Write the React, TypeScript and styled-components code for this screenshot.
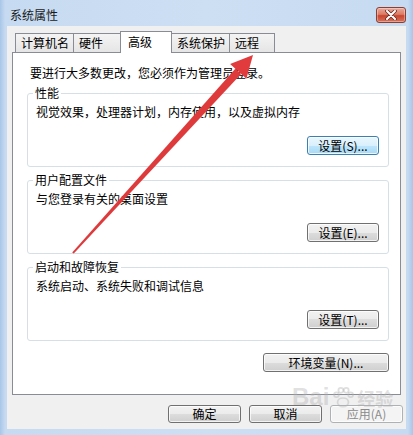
import React from 'react'
import styled, { createGlobalStyle, css } from 'styled-components'

const GlobalStyle = createGlobalStyle`
  html, body {
    margin: 0;
    padding: 0;
    width: 413px;
    height: 435px;
    overflow: hidden;
    background: #fff;
  }
  * {
    box-sizing: border-box;
  }
`

const Frame = styled.div`
  position: relative;
  width: 413px;
  height: 435px;
  padding: 0 7px 6px 7px;
  display: flex;
  flex-direction: column;
  background: linear-gradient(to right, #a8c5e8 0, #c6daf1 5px, #cddff3 50%, #c6daf1 calc(100% - 5px), #a8c5e8 100%);
  font-family: 'Noto Sans CJK SC', 'DejaVu Sans', sans-serif;
  font-size: 12px;
  color: #000;
`

const TitleBar = styled.div`
  height: 26px;
  display: flex;
  justify-content: space-between;
  align-items: flex-start;
`

const Title = styled.div`
  padding: 8px 0 0 3px;
  line-height: 14px;
  color: #1a1a1a;
`

const CloseButton = styled.div`
  margin-top: 7px;
  width: 30px;
  height: 16px;
  border: 1px solid #8a3f33;
  border-radius: 3px;
  display: flex;
  align-items: center;
  justify-content: center;
  background: linear-gradient(#eaa899 0%, #dc7c66 45%, #c9452f 55%, #d8735a 100%);
  box-shadow: inset 0 0 0 1px rgba(255, 255, 255, 0.35);
`

const Client = styled.div`
  flex: 1;
  background: #f0f0f0;
  display: flex;
  flex-direction: column;
  padding: 0 5px;
`

const TabStrip = styled.div`
  margin-top: 5px;
  height: 21px;
  padding-left: 3px;
  display: flex;
  align-items: flex-end;
`

const Tab = styled.div<{ $w: number; $active?: boolean }>`
  width: ${({ $w }) => $w}px;
  height: 19px;
  margin-left: -1px;
  padding: 2px 0 0 5px;
  line-height: 14px;
  border: 1px solid #898c95;
  border-bottom: none;
  background: linear-gradient(#f4f4f4, #e5e5e5);
  white-space: nowrap;
  ${({ $active }) =>
    $active &&
    css`
      position: relative;
      z-index: 2;
      height: 22px;
      margin-bottom: -1px;
      padding: 3px 0 0 7px;
      background: #fff;
    `}
  &:first-child {
    margin-left: 0;
  }
`

const Panel = styled.div`
  height: 343px;
  border: 1px solid #898c95;
  background: #fff;
  padding: 13px 11px 0 14px;
  display: flex;
  flex-direction: column;
`

const Intro = styled.div`
  margin-left: 3px;
  line-height: 14px;
`

const Group = styled.fieldset`
  margin: 6px 0 0 0;
  height: 81px;
  border: 1px solid #d5dfe5;
  border-radius: 3px;
  padding: 5px 9px 0 8px;
  min-width: 0;
  display: flex;
  flex-direction: column;
`

const Legend = styled.legend`
  margin-left: -3px;
  padding: 0 2px;
  line-height: 14px;
`

const Desc = styled.div`
  line-height: 14px;
`

const ButtonRow = styled.div<{ $top: number }>`
  margin-top: ${({ $top }) => $top}px;
  display: flex;
  justify-content: flex-end;
  gap: 8px;
`

const Button = styled.div<{ $w: number; $h?: number; $variant?: 'focus' | 'disabled' }>`
  width: ${({ $w }) => $w}px;
  height: ${({ $h }) => $h ?? 19}px;
  border: 1px solid #707070;
  border-radius: 3px;
  display: flex;
  align-items: center;
  justify-content: center;
  line-height: 14px;
  white-space: nowrap;
  background: linear-gradient(#f2f2f2 0%, #ebebeb 50%, #dddddd 50%, #cfcfcf 100%);
  box-shadow: inset 0 0 0 1px rgba(255, 255, 255, 0.75);
  ${({ $variant }) =>
    $variant === 'focus' &&
    css`
      border-color: #3c7fb1;
      background: linear-gradient(#eaf6fd 0%, #d9f0fc 50%, #bee6fd 50%, #a7d9f5 100%);
    `}
  ${({ $variant }) =>
    $variant === 'disabled' &&
    css`
      border-color: #adb2b5;
      background: #f4f4f4;
      color: #8a8a8a;
    `}
`

const EnvRow = styled.div`
  margin-top: 12px;
  display: flex;
  justify-content: flex-end;
`

const DialogButtons = styled.div`
  margin: 10px -2px 0 0;
  display: flex;
  justify-content: flex-end;
  gap: 8px;
`

const Overlay = styled.svg`
  position: absolute;
  left: 0;
  top: 0;
  pointer-events: none;
`

const Watermark = styled.div`
  position: absolute;
  left: 292px;
  top: 384px;
  display: flex;
  align-items: flex-end;
  gap: 2px;
  color: rgba(175, 175, 175, 0.4);
  pointer-events: none;
`

const WmBai = styled.div`
  font-family: 'Liberation Sans', sans-serif;
  font-weight: bold;
  font-size: 24px;
  line-height: 26px;
`

const WmJy = styled.div`
  font-size: 18px;
  line-height: 24px;
  font-weight: bold;
`

const groups = [
  { title: '性能', desc: '视觉效果，处理器计划，内存使用，以及虚拟内存', btn: '设置(S)...', focus: true },
  { title: '用户配置文件', desc: '与您登录有关的桌面设置', btn: '设置(E)...' },
  { title: '启动和故障恢复', desc: '系统启动、系统失败和调试信息', btn: '设置(T)...' },
]

const tabs = [
  { label: '计算机名', w: 59 },
  { label: '硬件', w: 48 },
  { label: '高级', w: 52, active: true },
  { label: '系统保护', w: 59 },
  { label: '远程', w: 46 },
]

export default function App() {
  return (
    <>
      <GlobalStyle />
      <Frame>
        <TitleBar>
          <Title>系统属性</Title>
          <CloseButton>
            <svg width="14" height="10" viewBox="0 0 14 10">
              <path d="M3 1 L11 9 M11 1 L3 9" stroke="#6b2a22" strokeWidth="3.6" strokeLinecap="round" />
              <path d="M3 1 L11 9 M11 1 L3 9" stroke="#fff" strokeWidth="2" strokeLinecap="round" />
            </svg>
          </CloseButton>
        </TitleBar>

        <Client>
          <TabStrip>
            {tabs.map((t) => (
              <Tab key={t.label} $w={t.w} $active={t.active}>
                {t.label}
              </Tab>
            ))}
          </TabStrip>

          <Panel>
            <Intro>要进行大多数更改，您必须作为管理员登录。</Intro>

            {groups.map((g) => (
              <Group key={g.title}>
                <Legend>{g.title}</Legend>
                <Desc>{g.desc}</Desc>
                <ButtonRow $top={17}>
                  <Button $w={72} $variant={g.focus ? 'focus' : undefined}>
                    {g.btn}
                  </Button>
                </ButtonRow>
              </Group>
            ))}

            <EnvRow>
              <Button $w={126} $h={19}>
                环境变量(N)...
              </Button>
            </EnvRow>
          </Panel>

          <DialogButtons>
            <Button $w={73} $h={18}>确定</Button>
            <Button $w={73} $h={18}>取消</Button>
            <Button $w={73} $h={18} $variant="disabled">应用(A)</Button>
          </DialogButtons>
        </Client>

        <Watermark>
          <WmBai>Bai</WmBai>
          <svg width="24" height="24" viewBox="0 0 22 22">
            <g fill="none" stroke="rgba(175,175,175,0.4)" strokeWidth="1.6">
              <ellipse cx="11" cy="15" rx="5" ry="4" />
              <circle cx="5" cy="8" r="2.2" />
              <circle cx="9" cy="4" r="2.2" />
              <circle cx="14" cy="4" r="2.2" />
              <circle cx="18" cy="8" r="2.2" />
            </g>
          </svg>
          <WmJy>经验</WmJy>
        </Watermark>

        <Overlay width="413" height="435" viewBox="0 0 413 435">
          <polygon points="72.2,252.4 73.8,253.6 241.1,73.9 235.3,68.7" fill="#de3a3c" />
          <polygon points="253,55 246.4,78.7 238.2,71.3 230.1,64.0" fill="#e23b3d" />
        </Overlay>
      </Frame>
    </>
  )
}
